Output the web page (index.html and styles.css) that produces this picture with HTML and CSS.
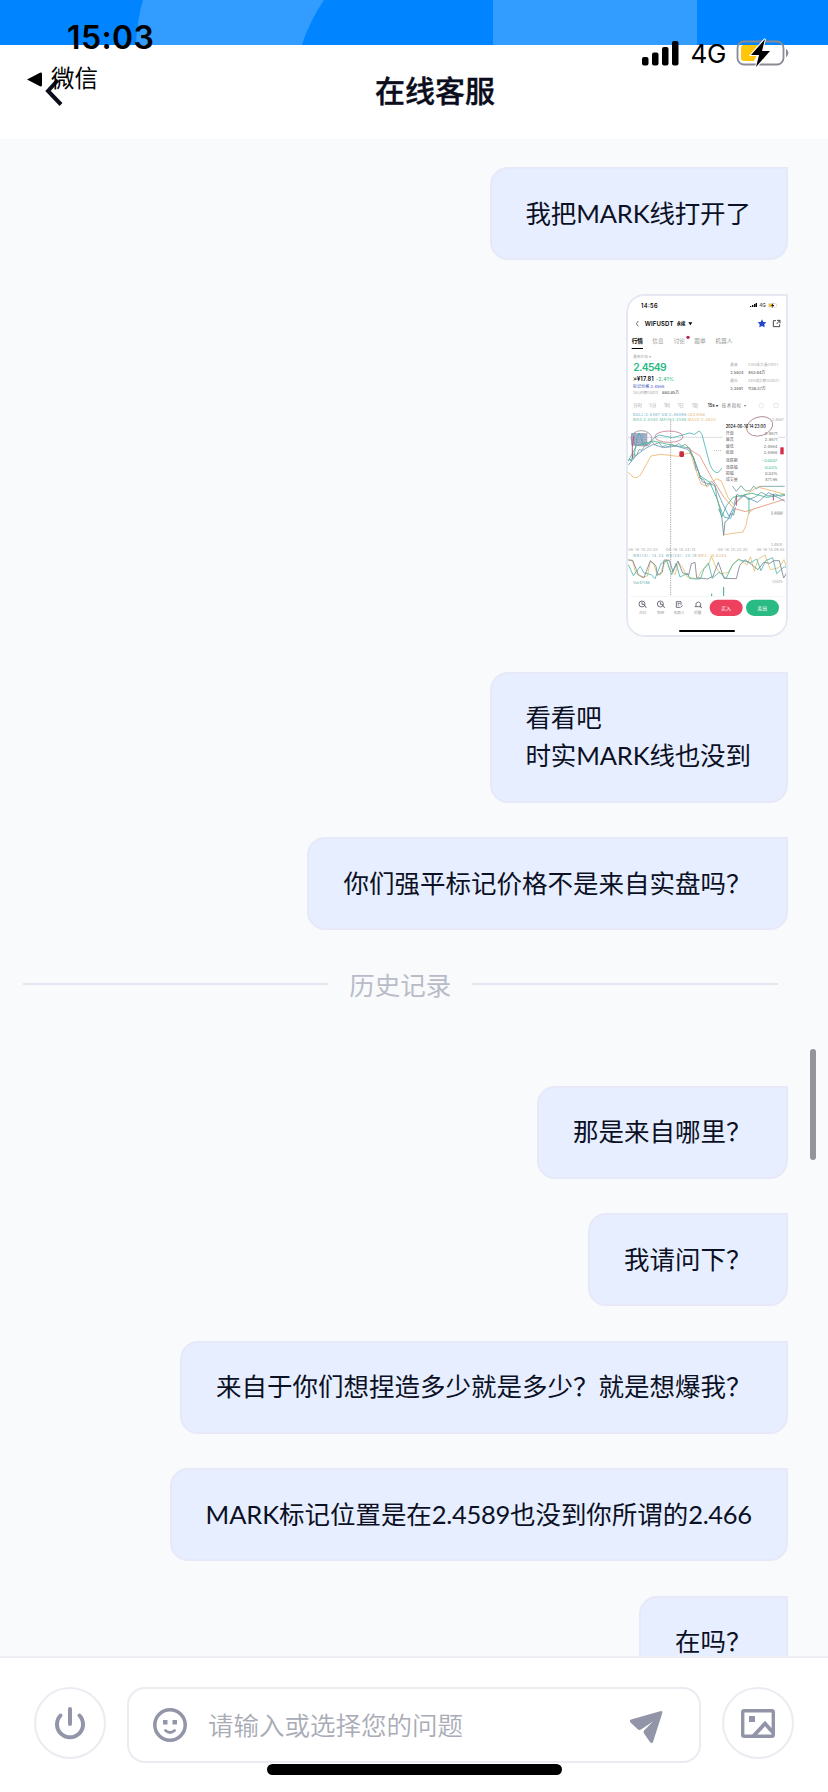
FILE: index.html
```html
<!DOCTYPE html>
<html lang="zh-CN">
<head>
<meta charset="utf-8">
<title>在线客服</title>
<link rel="stylesheet" href="styles.css">
</head>
<body>
<div class="phone">
  <header class="header">
    <svg class="banner" viewBox="0 0 828 45" width="828" height="45">
      <rect width="828" height="45" fill="#0084ff"/>
      <path d="M143 0H324Q309 22 302 45H136Q137 20 143 0Z" fill="#339dff"/>
      <path d="M493 0H697V45H493Z" fill="#339dff"/>
    </svg>
    <svg class="back" viewBox="0 0 20 32" width="20" height="32"><path d="M14 5 4 16l13 13.500" fill="none" stroke="#0b0d1c" stroke-width="4"/></svg>
    <h1 class="title">在线客服</h1>
    <span class="clock">15:03</span>
    <div class="return-app">
      <svg viewBox="0 0 15 15" width="15" height="15"><path d="M0 7.500 13 .7Q15 0 15 2V13Q15 15 13 14.300Z"/></svg>
      <span>微信</span>
    </div>
    <div class="status">
      <svg viewBox="0 0 37 25" width="37" height="25"><rect x="0" y="16" width="6.500" height="8.500" rx="2"/><rect x="10" y="11.500" width="6.500" height="13" rx="2"/><rect x="20" y="6" width="6.500" height="18.500" rx="2"/><rect x="30" y="0" width="6.500" height="24.500" rx="2"/></svg>
      <span class="net">4G</span>
      <svg viewBox="0 0 54 30" width="54" height="30"><rect x="1.500" y="3.500" width="46" height="23" rx="6.500" fill="none" stroke="#878b94" stroke-width="1.800"/><path d="M50.500 11.500q3 3.500 0 7Z" fill="#878b94" stroke="#878b94"/><path d="M8 7H22L15 17h6l-3 6H8Q5 23 5 20V10Q5 7 8 7Z" fill="#ffc60b"/><path d="M29 1 15 17h8l-3 12 14-16h-8Z" fill="#000" stroke="#fff" stroke-width="2" paint-order="stroke"/></svg>
    </div>
  </header>

  <main class="chat">
    <div class="bubble w1">我把MARK线打开了</div>
    <div class="shot">
      <svg viewBox="0 0 162 342" width="162" height="342">
        <rect width="162" height="342" fill="#fff"/>
        <g transform="translate(-6 -5) scale(.33333)">
          <text x="63" y="56" class="b" font-size="17" textLength="50">14:56</text>
          <path d="M390 54h4v-3h-4zM396 54h4v-6h-4zM402 54h4v-9h-4zM407 54h4v-12h-4z"/>
          <text x="418" y="55" font-size="14">4G</text>
          <rect x="445" y="43" width="25" height="12" rx="4" fill="#fff" stroke="#aaa"/><rect x="447" y="44" width="11" height="10" rx="2" fill="#f6c433"/><path d="m460 41-7 9h5l-2 8 7-10h-5z"/>
          <path d="m55 96-6 8 6 8" fill="none" stroke="#222" stroke-width="2"/>
          <text x="74" y="110" class="b" font-size="18" textLength="86">WIFUSDT</text>
          <text x="170" y="109" class="b" font-size="13">永续</text><path d="M205 100h12l-6 9z"/>
          <path d="m426 91 4 8 9 1-6 6 1 9-8-4-8 4 1-9-6-6 9-1z" fill="#2446cf"/>
          <path d="M468 95h-8v18h19v-7M471 94h9v9M479 95l-9 10" fill="none" stroke="#222" stroke-width="2.500"/>
          <text x="35" y="163" class="b" font-size="17">行情</text>
          <g fill="#999" font-size="17"><text x="97" y="163">信息</text><text x="161" y="163">讨论</text><text x="223" y="163">跟单</text><text x="286" y="163">机器人</text></g>
          <circle cx="204" cy="145" r="5" fill="#b82358"/><path d="M35 177h34v3H35z"/>
          <g fill="#aaa" font-size="11"><text x="40" y="208">最新价格 ▾</text><text x="331" y="230">最高</text><text x="384" y="230" textLength="91">24H成交量(WIF)</text><text x="331" y="278">最低</text><text x="384" y="278" textLength="94">24H成交额(USDT)</text><text x="39" y="316" textLength="76">24小时额(USDT)</text></g>
          <text x="40" y="246" class="b" font-size="31" fill="#2bb985" textLength="100">2.4549</text>
          <text x="39" y="276" class="b" font-size="17" textLength="62">≈¥17.81</text><text x="108" y="276" font-size="16" fill="#2bb985" textLength="54">-2.41%</text>
          <text x="39" y="297" font-size="12" fill="#3048bc" textLength="94">标记价格 2.4566</text>
          <g font-size="12" fill="#444"><text x="126" y="315">880.85万</text><text x="331" y="255">2.5824</text><text x="384" y="255">463.94万</text><text x="331" y="303">2.3591</text><text x="384" y="303">1138.37万</text></g>
          <g fill="#aaa" font-size="13"><text x="40" y="355">分时</text><text x="88" y="355">5分</text><text x="132" y="355">1时</text><text x="173" y="355">1日</text><text x="215" y="355">1周</text><text x="263" y="355" class="b" fill="#333">15s ▾</text><text x="305" y="355" fill="#777" textLength="72">技术指标 ▾</text></g>
          <g fill="none" stroke="#ddd" stroke-width="2"><circle cx="424" cy="350" r="7"/><path d="M462 343h12v12h-12z"/></g>
        </g>
        <g transform="translate(-6 105) scale(.33333)" stroke-linejoin="round">
          <g font-size="11"><text x="39" y="52" fill="#61a9c0" textLength="160">BOLL:2.4597 UB:2.46096</text><text x="203" y="52" fill="#e6b26e" textLength="52">LB:2.4558</text><text x="39" y="66" fill="#57bda5" textLength="160">MA5:2.4580 MA10:2.4598</text><text x="203" y="66" fill="#e6b26e" textLength="84">MA30:2.4605</text><text x="455" y="65" fill="#aaa">2.4667</text><text x="453" y="346" fill="#aaa">2.4555</text></g>
          <path d="M23 115h285M282 155h25M473 115h22" fill="none" stroke="#8b9ba8" stroke-dasharray="3 3" stroke-width="2"/>
          <path d="M152 60V590" fill="none" stroke="#999" stroke-dasharray="4 3" stroke-width="2.500"/>
          <rect x="33" y="102" width="49" height="38" fill="#a9b4cc"/>
          <path d="M33 108h48M33 115h48M33 122h48M33 130h48M43 102v38M54 102v38M66 102v38" stroke="#7e89a5" fill="none"/>
          <g fill="none" stroke-width="2.500">
            <path d="M25 185q10-5 17-8l8-60 8-15 12 35 20-5 12-15 15-9 40 8 35-9 15-5 17 4 13-10 8 7 25 94q10 25 24 24l12-14" stroke="#49b3b6"/>
            <path d="M25 220l15 15q15 4 23-10l30-54 30-5 50 6 30-9 10 1 12 42 18 49 20 8 26-24 15 7 20 49 18 23 28-26 43-28 82 22" stroke="#efb56b"/>
            <path d="M25 185l25-45 30-9 19-5 40 9 45 8 25 4 31 83 29 20 24 54 12 50 15-35 19-24 57-12 45 12 54-9" stroke="#3cb893"/>
            <path d="M25 198l25-30 27-20 23-12 30 10 38-5 35 10 16 20 28 78 37 10 24 55 19 38 21-42 20-20 45 20 33-29 49 26" stroke="#6298c9"/>
            <path d="M199 145l40 25 37 68 36 57 29 33 35 10 117-37" stroke="#e49470"/>
            <path d="M29 180l5 7 6-22 9 5 9-19 7 3 9-13 12-2 9-11 9 8 13-5 9 12 11-3 7 4 11-8 11 6 10-9 9 8 12-5 12 14 6 20 6 6 7 35 8 7 3 19 12 5 8 19 15-14 10 10 8 45 12 33" stroke="#7b9a8b"/>
            <path d="M337 261l12 16 14-17 14 16 14-1 10-14 8 9 10-8h75M342 315l9-29 14 8 9-7 10 15 22-8 18-14 20 11 22-6 15 7 14-3" stroke="#6aa19a"/>
            <path d="M387 295v50" stroke="#3cb893"/>
            <path d="M41 112q-6 33-4 65M349 289v31M460 286v19" stroke="#b53662"/>
            <ellipse cx="147" cy="113" rx="42" ry="17" stroke="#c87789"/><ellipse cx="64" cy="118" rx="31" ry="23" stroke="#9c8798"/>
          </g>
          <rect x="178" y="157" width="14" height="17" rx="4" fill="#c92f46"/><rect x="481" y="145" width="10" height="21" fill="#d62b45"/>
          <rect x="308" y="72" width="167" height="182" fill="#fff"/>
          <ellipse cx="419" cy="82" rx="40" ry="28" fill="none" stroke="#a98388" stroke-width="2.500" transform="rotate(-17 419 82)"/>
          <text x="317" y="88" font-size="12.500" font-weight="500" textLength="120" lengthAdjust="spacingAndGlyphs">2024-06-16 14:23:00</text>
          <g font-size="12" fill="#666"><text x="317" y="108">开盘</text><text x="317" y="127">最高</text><text x="317" y="146">最低</text><text x="317" y="165">收盘</text><text x="317" y="190">涨跌额</text><text x="317" y="209">涨跌幅</text><text x="317" y="228">振幅</text><text x="317" y="247">成交量</text></g>
          <g font-size="12" fill="#666" text-anchor="end"><text x="472" y="108">2.4671</text><text x="472" y="127">2.4671</text><text x="472" y="146">2.4664</text><text x="472" y="165">2.4666</text><text x="472" y="190" fill="#2bb985">-0.0007</text><text x="472" y="209" fill="#2bb985">-0.03%</text><text x="472" y="228">0.03%</text><text x="472" y="247">471.66</text></g>
        </g>
        <g transform="translate(-6 215) scale(.33333)" fill="none" stroke-width="2.500" stroke-linejoin="round">
          <path d="M296 0l9 20 6 59 4-40 7-5 11-20 8 4 5-23" stroke="#69898d"/>
          <path d="M312 77l57-8 9-20 8-37 15-12" stroke="#eab67b"/><path d="M300 0l14 25 18 3 10-28" stroke="#42adbf"/>
          <g stroke="none" font-size="10" fill="#999"><text x="25" y="126" textLength="88">06-16 14:20:30</text><text x="138" y="126" textLength="88">06-16 14:24:15</text><text x="294" y="126" textLength="88">06-16 14:32:30</text><text x="410" y="126" textLength="83">06-16 14:39:45</text><text x="39" y="143" fill="#669eac" textLength="190">WR(14): 14.33 WR(28): 20.19</text><text x="233" y="143" fill="#e1a36e" textLength="86">WR3: 16.6285</text><text x="453" y="110">2.4500</text><text x="453" y="18">2.4566</text><text x="40" y="226" fill="#52a5a5">Vol:471.66</text><text x="456" y="223">1.0475</text></g>
          <path d="M25 152l13 5 9 35 18 14 17-5 9-43 9 3 8 26 12 12 8-25 12-23 9 31 16 15 11-36 12 15 13 27 30 7 14-25 21-18 8-25 14 33 13 19 23-3 16-25 15-17 17 12 9 7 10-25 12 44 12-37 20-12 16 44 26-6 15-24 13 37 19-50 12 21" stroke="#dfc270"/>
          <path d="M25 167l15 33 21-28 11 20 22 5 11 12 18-45 17-9 15 42 13-34 12 41 23-11 6 16 32 1 11-31 13-17 12 46 21-19 20 20 20-43 18-14 36 9 18-11 13 35 14-30 21-9 12 48 23-21 17 11 16-43 11 40 13-12" stroke="#4cb8a7"/>
          <path d="M25 153l13 1 17 43 17 9 19-51 17 16 4 28 15-9 5-37 16 1 11 34 15-32 14 36 18 6 8-34 11-4 5 46 32 4 17-8 16-42 17 48 37 1 10-40 16-17 20 15 19 15 17-22 18 3 13-8h16l13 52 14-24 17-2 17-33 14 11" stroke="#7a8291"/>
          <path d="M311 234v27M275 254v8" stroke="#36a894" stroke-width="3"/>
          <path d="M30 263h465" stroke="#f2f2f2"/>
          <g stroke="#555866"><circle cx="66" cy="285" r="9"/><circle cx="121" cy="285" r="9"/><path d="M66 279v7h6l7 11M121 279v7h6l7 11M183 288v-10h-14v17h11M173 283h6M173 288h4M181 295l7-5M228 293v-10q7-9 14 0v10h-18M238 291l8 6"/></g>
          <g stroke="none" font-size="11" fill="#999"><text x="57" y="314">合约</text><text x="111" y="314">划转</text><text x="161" y="314">机器人</text><text x="222" y="314">提醒</text></g>
          <rect x="269" y="272" width="99" height="49" rx="24.500" fill="#ee4160"/><rect x="378" y="272" width="99" height="49" rx="24.500" fill="#2aba83"/>
          <g stroke="none" fill="#fff" font-size="15" text-anchor="middle"><text x="318" y="302">买入</text><text x="427" y="302">卖出</text></g>
          <rect x="177" y="363" width="168" height="6" rx="3" fill="#000"/>
        </g>
      </svg>
    </div>
    <div class="bubble w1">看看吧<br>时实MARK线也没到</div>
    <div class="bubble">你们强平标记价格不是来自实盘吗？</div>
    <div class="history"><span>历史记录</span></div>
    <div class="bubble">那是来自哪里？</div>
    <div class="bubble">我请问下？</div>
    <div class="bubble">来自于你们想捏造多少就是多少？就是想爆我？</div>
    <div class="bubble w2">MARK标记位置是在<span class="num">2.4589</span>也没到你所谓的<span class="num">2.466</span></div>
    <div class="bubble">在吗？</div>
    <i class="scrollbar"></i>
  </main>

  <footer class="composer">
    <button class="round">
      <svg viewBox="0 0 32 34" width="32" height="34" fill="none" stroke="#9295a8" stroke-width="4" stroke-linecap="round"><path d="M16 3v15M6.500 9.500a13 13 0 1 0 19 0"/></svg>
    </button>
    <div class="field">
      <svg viewBox="0 0 36 36" width="36" height="36"><circle cx="18" cy="18" r="15.200" fill="none" stroke="#9295a8" stroke-width="3.500"/><path d="M11 13h4.500v4.500H11zM20.500 13H25v4.500h-4.500z" fill="#9295a8"/><path d="M13.500 23.500q4.500 4 9 0" fill="none" stroke="#9295a8" stroke-width="2.800" stroke-linecap="round"/></svg>
      <span class="placeholder">请输入或选择您的问题</span>
      <svg class="send" viewBox="0 0 34 34" width="34" height="34"><path d="M32 1Q34 1 33.300 3L24 32Q22.500 34 21 32L15 23.500Q14 22 15 20.500L24 11.500 12 19.500Q10 20.500 8.500 19L1.500 12.500Q0 10.500 2 9.500Z" fill="#9295a8"/></svg>
    </div>
    <button class="round">
      <svg viewBox="0 0 34 29" width="34" height="29"><rect x="1.700" y="1.700" width="30.600" height="25.600" rx="1.500" fill="none" stroke="#9295a8" stroke-width="3.400"/><path d="M8 7h6v6H8z" fill="#9295a8"/><path d="M12.500 27 24 14.500l8 9" fill="none" stroke="#9295a8" stroke-width="3.800"/></svg>
    </button>
    <i class="home"></i>
  </footer>
</div>
</body>
</html>
```
FILE: styles.css
```css
* { box-sizing: border-box; }
body { margin: 0; font-family: Lato, "Noto Sans CJK SC", sans-serif; }
.phone { width: 828px; height: 1792px; display: flex; flex-direction: column; overflow: hidden; background: #fff; }
svg { display: block; flex: none; }

.header { position: relative; height: 139px; flex: none; display: flex; justify-content: center; padding: 44px 0 0 42px; background: #fff; }
.banner { position: absolute; left: 0; top: 0; }
.title { margin: 0; font-size: 30px; font-weight: 500; line-height: 93px; color: #0b0d1c; -webkit-text-stroke: .4px #0b0d1c; }
.back { position: absolute; left: 44px; top: 75px; }
.clock { position: absolute; left: 67px; top: 18px; font: 600 32px/40px Inter, sans-serif; letter-spacing: .4px; }
.return-app { position: absolute; left: 27px; top: 61px; display: flex; align-items: center; gap: 9px; font-size: 23.500px; line-height: 34px; color: #000; }
.return-app svg { margin-top: 2px; }
.status { position: absolute; left: 642px; top: 37px; display: flex; align-items: center; gap: 11.500px; }
.net { width: 34px; font: 400 26px/30px Inter, sans-serif; letter-spacing: -.2px; padding-top: 2px; }

.chat { position: relative; height: 1517px; flex: none; overflow: hidden; display: flex; flex-direction: column; align-items: flex-end; gap: 34.400px; padding: 28px 40.500px 0 23px; background: #f8fafc; }
.bubble { flex: none; padding: 24.500px 34px 26.500px 34px; border: 2px solid #e7e9f8; border-radius: 18px 0 18px 18px; background: #e6eeff; color: #0c1024; font-size: 25.500px; line-height: 38px; white-space: nowrap; }
.w1 { width: 298px; letter-spacing: -.15px; }
.w2 { width: 618px; letter-spacing: -.05px; }
.num { letter-spacing: -.3px; }
.shot { flex: none; width: 162px; height: 343px; overflow: hidden; border-radius: 18px 0 18px 18px; position: relative; background: #fff; }
.shot::after { content: ""; position: absolute; inset: 0; border: 2px solid #e5e8f2; border-radius: inherit; }
.shot svg { font-family: Inter, "Noto Sans CJK SC", sans-serif; }
.b { font-weight: 600; }
.history { flex: none; align-self: stretch; display: flex; align-items: center; gap: 21px; height: 38px; margin: 0 10px 49px 0; color: #b9bcc8; font-size: 25.500px; }
.history::before, .history::after { content: ""; flex: 1; height: 2px; background: #e3e6f1; }
.scrollbar { position: absolute; left: 809.500px; top: 910px; width: 6px; height: 111px; border-radius: 3px; background: #929499; }

.composer { position: relative; flex: 1; display: flex; align-items: flex-start; gap: 21px; padding: 29px 34px 0 34px; border-top: 2px solid #eeeff5; background: #fff; }
.round { flex: none; width: 72px; height: 72px; display: flex; align-items: center; justify-content: center; padding: 0; border: 2px solid #ebebf2; border-radius: 50%; background: #fff; }
.field { flex: 1; height: 76px; display: flex; align-items: center; padding: 0 36px 0 23px; border: 2px solid #ebebf2; border-radius: 18px; }
.placeholder { flex: 1; margin-left: 20px; color: #a9acb6; font-size: 25.500px; font-weight: 350; line-height: 38px; }
.send { margin-top: 4px; }
.home { position: absolute; left: 267px; bottom: 17px; width: 295px; height: 11px; border-radius: 6px; background: #000; }
```
